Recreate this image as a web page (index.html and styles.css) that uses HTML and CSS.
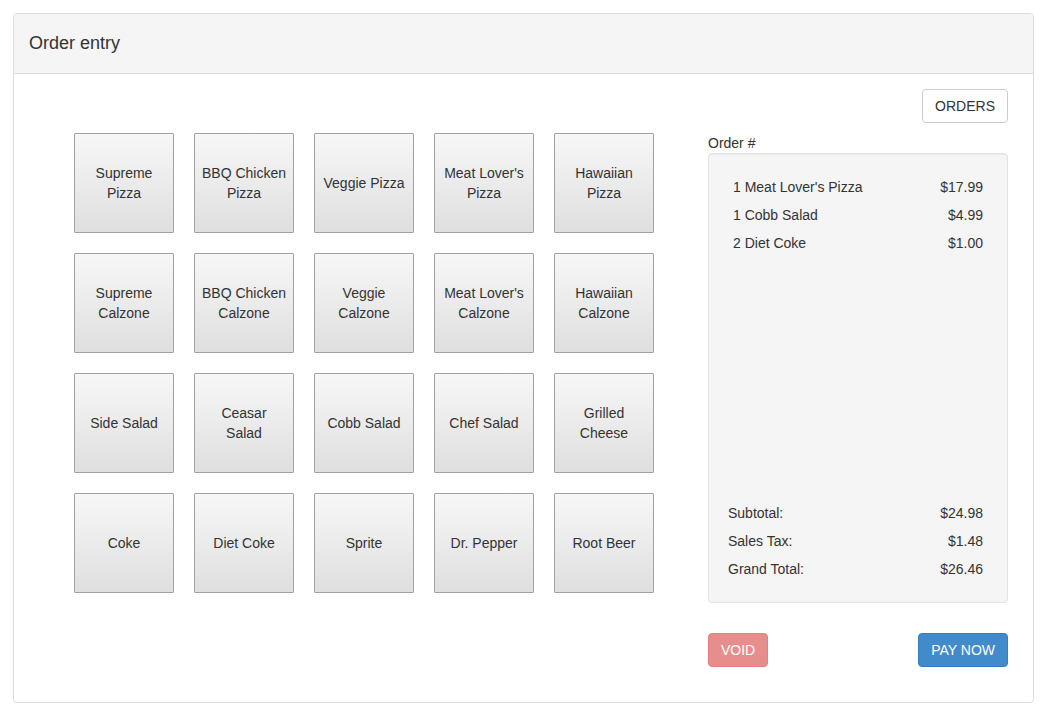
FILE: index.html
```html
<!DOCTYPE html>
<html lang="en">
<head>
<meta charset="utf-8">
<title>Order entry</title>
<link rel="stylesheet" href="styles.css">
</head>
<body>
<div class="panel">
  <div class="panel-heading">Order entry</div>
  <div class="panel-body">
    <div class="menu">
      <button class="tile">Supreme<br>Pizza</button>
      <button class="tile">BBQ Chicken<br>Pizza</button>
      <button class="tile">Veggie Pizza</button>
      <button class="tile">Meat Lover's<br>Pizza</button>
      <button class="tile">Hawaiian<br>Pizza</button>
      <button class="tile">Supreme<br>Calzone</button>
      <button class="tile">BBQ Chicken<br>Calzone</button>
      <button class="tile">Veggie<br>Calzone</button>
      <button class="tile">Meat Lover's<br>Calzone</button>
      <button class="tile">Hawaiian<br>Calzone</button>
      <button class="tile">Side Salad</button>
      <button class="tile">Ceasar<br>Salad</button>
      <button class="tile">Cobb Salad</button>
      <button class="tile">Chef Salad</button>
      <button class="tile">Grilled<br>Cheese</button>
      <button class="tile">Coke</button>
      <button class="tile">Diet Coke</button>
      <button class="tile">Sprite</button>
      <button class="tile">Dr. Pepper</button>
      <button class="tile">Root Beer</button>
    </div>
    <div class="order">
      <button class="btn btn-default orders-btn">ORDERS</button>
      <div class="order-label">Order #</div>
      <div class="well">
        <div class="items">
          <div class="row"><span>1 Meat Lover's Pizza</span><span>$17.99</span></div>
          <div class="row"><span>1 Cobb Salad</span><span>$4.99</span></div>
          <div class="row"><span>2 Diet Coke</span><span>$1.00</span></div>
        </div>
        <div class="totals">
          <div class="row"><span>Subtotal:</span><span>$24.98</span></div>
          <div class="row"><span>Sales Tax:</span><span>$1.48</span></div>
          <div class="row"><span>Grand Total:</span><span>$26.46</span></div>
        </div>
      </div>
      <div class="actions">
        <button class="btn btn-danger" disabled>VOID</button>
        <button class="btn btn-primary">PAY NOW</button>
      </div>
    </div>
  </div>
</div>
</body>
</html>
```

FILE: styles.css
```css
* { box-sizing: border-box; }
html, body { background: #fff; }
body {
  margin: 13px 14px 13px 13px;
  font-family: "Liberation Sans", Arial, sans-serif;
  font-size: 14px;
  line-height: 20px;
  color: #333;
}
.panel {
  border: 1px solid #ddd;
  border-radius: 4px;
  height: 690px;
  display: flex;
  flex-direction: column;
}
.panel-heading {
  background: #f5f5f5;
  border-bottom: 1px solid #ddd;
  padding: 20px 15px;
  font-size: 18px;
  line-height: 19px;
  color: #333;
  border-radius: 3px 3px 0 0;
}
.panel-body {
  flex: 1;
  display: flex;
  padding: 15px 25px 35px 60px;
}
.menu {
  margin-top: 44px;
  display: grid;
  grid-template-columns: repeat(5, 100px);
  grid-auto-rows: 100px;
  gap: 20px;
  align-content: start;
}
.tile {
  font: inherit;
  color: #333;
  white-space: nowrap;
  text-align: center;
  display: flex;
  align-items: center;
  justify-content: center;
  padding: 0;
  border: 1px solid #a2a2a2;
  border-radius: 1px;
  background: linear-gradient(#f7f7f7, #dfdfdf);
  cursor: pointer;
}
.order {
  margin-left: auto;
  width: 300px;
  display: flex;
  flex-direction: column;
}
.btn {
  font: inherit;
  height: 34px;
  padding: 6px 12px;
  border-radius: 4px;
  border: 1px solid transparent;
  line-height: 20px;
  cursor: pointer;
}
.btn-default {
  background: #fff;
  border-color: #ccc;
  color: #333;
}
.orders-btn { align-self: flex-end; }
.order-label {
  margin-top: 10px;
  line-height: 20px;
}
.well {
  height: 450px;
  background: #f5f5f5;
  border: 1px solid #e3e3e3;
  border-radius: 4px;
  padding: 19px;
  display: flex;
  flex-direction: column;
  justify-content: space-between;
  box-shadow: inset 0 1px 1px rgba(0,0,0,0.05);
}
.row {
  display: flex;
  justify-content: space-between;
  line-height: 28px;
}
.items .row { padding: 0 5px; }
.totals .row { padding: 0 5px 0 0; }
.actions {
  margin-top: 30px;
  display: flex;
  justify-content: space-between;
}
.btn-danger {
  color: #fff;
  background: #d9534f;
  border-color: #d43f3a;
  opacity: 0.65;
  cursor: not-allowed;
}
.btn-primary {
  color: #fff;
  background: #428bca;
  border-color: #357ebd;
}
```
